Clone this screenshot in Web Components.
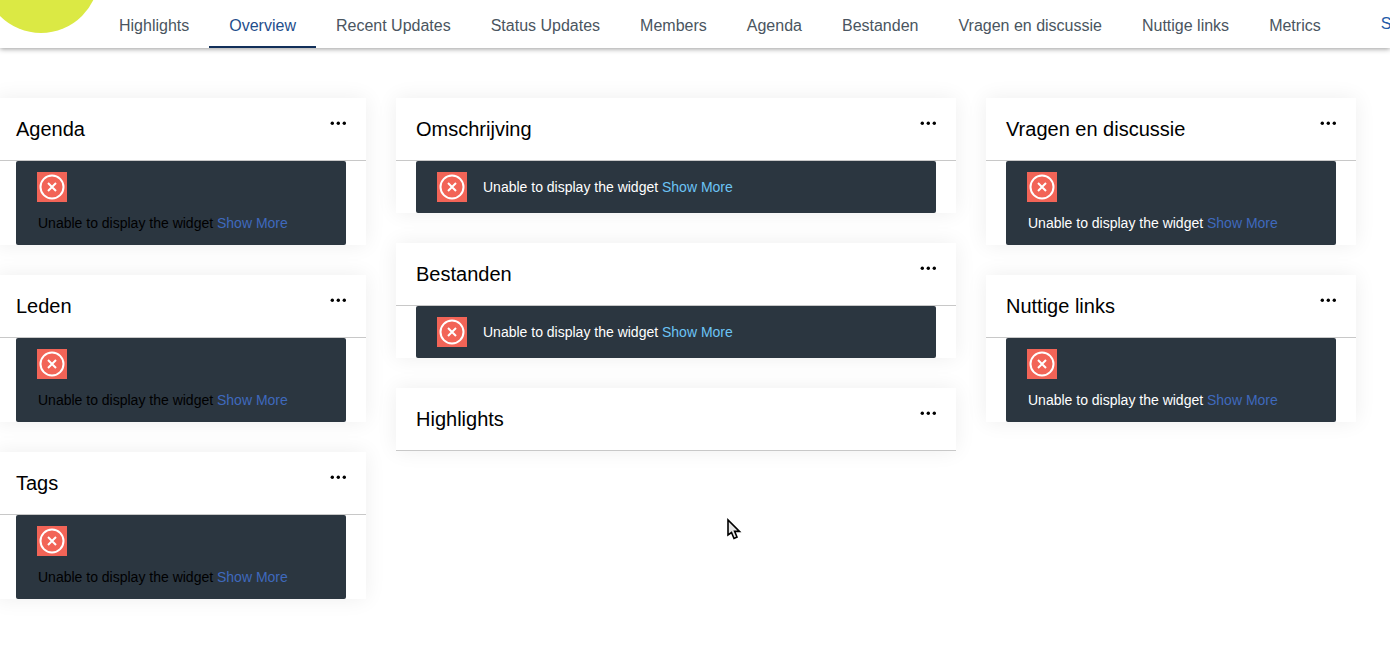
<!DOCTYPE html>
<html>
<head>
<meta charset="utf-8">
<title>Overview</title>
<style>
    html, body { margin: 0; height: 100%; overflow: hidden; background: #fff; }
    body { font-family: "Liberation Sans", Arial, sans-serif; position: relative; }
    .mouse { position: absolute; left: 726px; top: 518px; }
</style>
</head>
<body>
<top-nav active="Overview" items="Highlights,Overview,Recent Updates,Status Updates,Members,Agenda,Bestanden,Vragen en discussie,Nuttige links,Metrics"></top-nav>
<widget-board>
    <div slot="left">
        <widget-card title="Agenda"><widget-error stacked text="dark"></widget-error></widget-card>
        <widget-card title="Leden"><widget-error stacked text="dark"></widget-error></widget-card>
        <widget-card title="Tags"><widget-error stacked text="dark"></widget-error></widget-card>
    </div>
    <div slot="center">
        <widget-card title="Omschrijving"><widget-error link="light"></widget-error></widget-card>
        <widget-card title="Bestanden"><widget-error link="light"></widget-error></widget-card>
        <widget-card title="Highlights"></widget-card>
    </div>
    <div slot="right">
        <widget-card title="Vragen en discussie"><widget-error stacked></widget-error></widget-card>
        <widget-card title="Nuttige links"><widget-error stacked></widget-error></widget-card>
    </div>
</widget-board>
<svg class="mouse" width="16" height="24" viewBox="0 0 16 24">
    <path d="M2 2 L2 17 L5.5 14.5 L8 20.5 L11 19 L8.6 13.4 L13.5 13.4 Z" fill="#e6e6e6" stroke="#000" stroke-width="1.6"/>
</svg>
<script>
class TopNav extends HTMLElement {
    constructor() {
        super();
        this.attachShadow({mode: 'open'});
    }

    connectedCallback() {
        const active = this.getAttribute('active');
        const tabs = this.getAttribute('items').split(',').map(item =>
            `<a class="${item === active ? 'tab on' : 'tab'}">${item}</a>`).join('');
        this.shadowRoot.innerHTML = `
        <style>
            :host {
                display: block;
                height: 48px;
                position: relative;
                background: #fff;
                box-shadow: 0 1px 5px rgba(0,0,0,0.4);
            }
            #clip {
                position: absolute;
                inset: 0;
                overflow: hidden;
            }
            #logo {
                position: absolute;
                left: -17px;
                top: -83px;
                width: 116px;
                height: 116px;
                border-radius: 50%;
                background: #dbe944;
            }
            #tabs {
                display: flex;
                height: 48px;
                padding-left: 99px;
                white-space: nowrap;
            }
            .tab {
                padding: 0 20px;
                line-height: 51px;
                height: 46px;
                font-size: 16px;
                color: #4a5560;
                border-bottom: 2px solid transparent;
            }
            .on {
                color: #1f4e8c;
                border-bottom-color: #12305a;
            }
            #more {
                color: #1f5ba8;
                line-height: 47px;
                font-size: 16px;
                padding-left: 40px;
            }
        </style>
        <div id="clip">
            <div id="logo"></div>
            <div id="tabs">${tabs}<span id="more">S</span></div>
        </div>
        `
    }
}

class WidgetBoard extends HTMLElement {
    constructor() {
        super();
        this.attachShadow({mode: 'open'});
        this.shadowRoot.innerHTML = `
        <style>
            :host {
                display: grid;
                grid-template-columns: 370px 560px 370px;
                column-gap: 30px;
                margin-left: -4px;
                padding-top: 50px;
            }
            ::slotted(div) {
                display: flex;
                flex-direction: column;
                gap: 30px;
            }
        </style>
        <slot name="left"></slot>
        <slot name="center"></slot>
        <slot name="right"></slot>
        `
    }
}

class WidgetCard extends HTMLElement {
    constructor() {
        super();
        this.attachShadow({mode: 'open'});
    }

    connectedCallback() {
        this.shadowRoot.innerHTML = `
        <style>
            :host {
                display: block;
                background: #fff;
                box-shadow: 0 0 20px rgba(0,0,0,0.07);
            }
            #head {
                display: flex;
                justify-content: space-between;
                height: 62px;
                padding: 0 20px;
                border-bottom: 1px solid #c8c8c8;
                color: #000;
            }
            #title {
                font-size: 20px;
                line-height: 62px;
            }
            #dots {
                margin-top: 23px;
            }
            #body {
                padding: 0 20px;
            }
        </style>
        <div id="head">
            <div id="title">${this.getAttribute('title')}</div>
            <svg id="dots" width="16" height="5" viewBox="0 0 16 5" fill="#000">
                <circle cx="2.3" cy="2.3" r="1.7"/><circle cx="8.3" cy="2.3" r="1.7"/><circle cx="14.3" cy="2.3" r="1.7"/>
            </svg>
        </div>
        <div id="body"><slot></slot></div>
        `
    }
}

class WidgetError extends HTMLElement {
    constructor() {
        super();
        this.attachShadow({mode: 'open'});
    }

    connectedCallback() {
        const stacked = this.hasAttribute('stacked');
        this.shadowRoot.innerHTML = `
        <style>
            :host {
                display: block;
                background: #2b3640;
                border-radius: 2px;
                color: ${this.getAttribute('text') === 'dark' ? '#000' : '#fff'};
                font-size: 14px;
            }
            #box {
                display: flex;
                flex-direction: ${stacked ? 'column' : 'row'};
                align-items: ${stacked ? 'flex-start' : 'center'};
                height: ${stacked ? 84 : 52}px;
                box-sizing: border-box;
                padding: ${stacked ? '11px 0 0 21px' : '0 0 0 21px'};
            }
            #icon {
                flex: none;
                width: 30px;
                height: 30px;
                background: #f26457;
                display: block;
            }
            #msg {
                line-height: 20px;
                margin: ${stacked ? '11px 0 0 1px' : '0 0 0 16px'};
            }
            a {
                color: ${this.getAttribute('link') === 'light' ? '#6cc4f5' : '#3f69bd'};
            }
        </style>
        <div id="box">
            <svg id="icon" viewBox="0 0 30 30" fill="none" stroke="#fff">
                <circle cx="15" cy="15" r="11.5" stroke-width="2"/>
                <path d="M11 11 L19 19 M19 11 L11 19" stroke-width="2"/>
            </svg>
            <div id="msg">Unable to display the widget <a>Show More</a></div>
        </div>
        `
    }
}

customElements.define('top-nav', TopNav);
customElements.define('widget-board', WidgetBoard);
customElements.define('widget-card', WidgetCard);
customElements.define('widget-error', WidgetError);
</script>
</body>
</html>
